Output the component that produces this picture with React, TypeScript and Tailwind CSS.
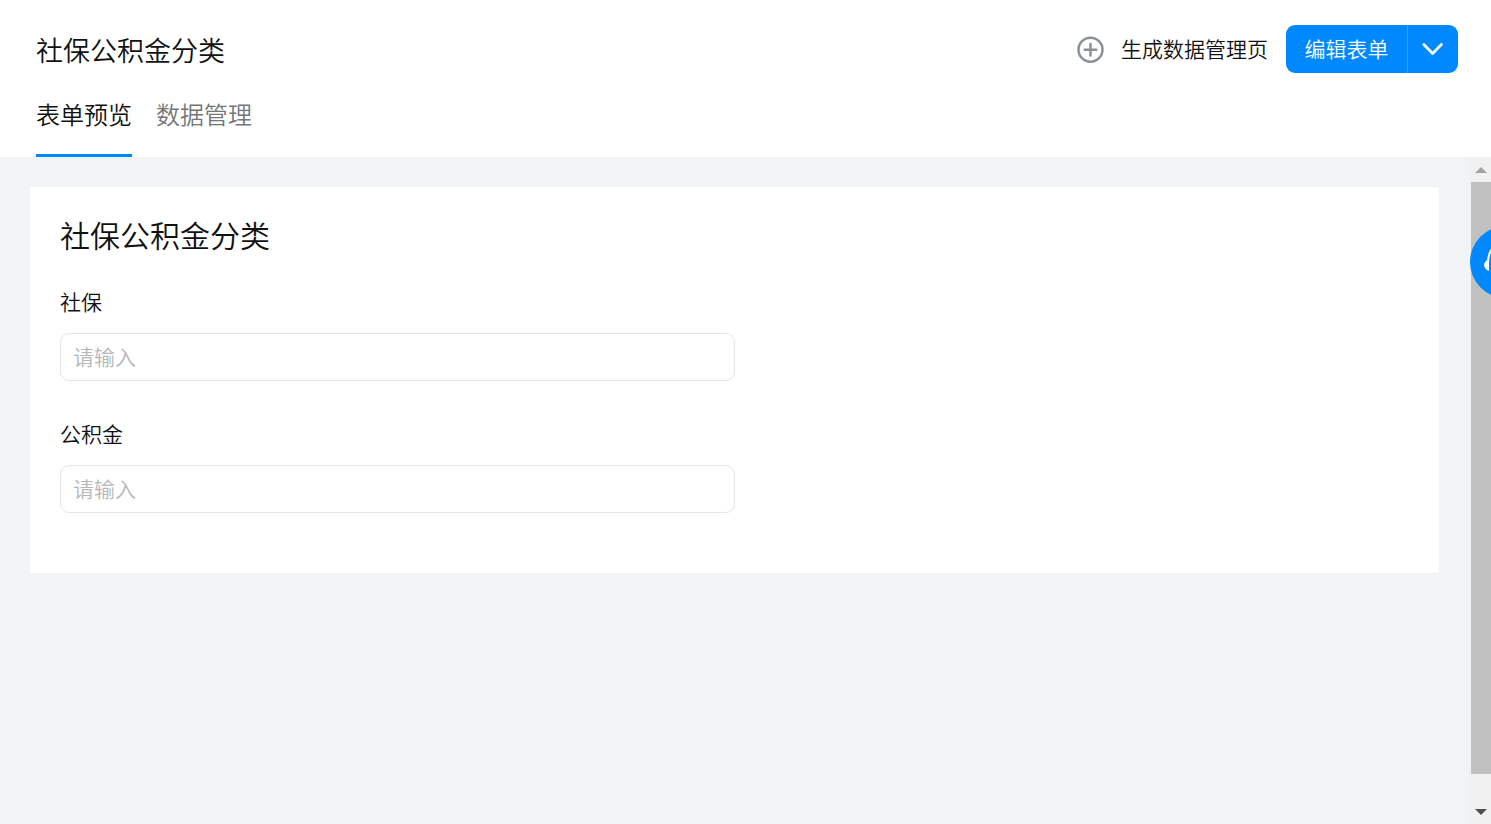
import { useState } from "react";
import clsx from "clsx";

const tabs = [
  { id: "preview", label: "表单预览" },
  { id: "data", label: "数据管理" },
];

const fields = [
  { id: "social-security", label: "社保" },
  { id: "housing-fund", label: "公积金" },
];

function PlusCircleIcon() {
  return (
    <svg className="size-7 shrink-0" viewBox="0 0 28 28" fill="none" stroke="#8a9199" strokeWidth="2.5" strokeLinecap="round">
      <circle cx="13.5" cy="14.7" r="12" />
      <path d="M13.5 8.9v11.6M7.7 14.7h11.6" />
    </svg>
  );
}

function HeaderActions() {
  return (
    <div className="flex items-center">
      <button type="button" className="flex items-center gap-4 text-[21px] leading-8">
        <PlusCircleIcon />
        <span className="pb-[2px]">生成数据管理页</span>
      </button>
      <div className="ml-[18px] flex h-12 overflow-hidden rounded-[9px] bg-[#0089ff] text-white">
        <button type="button" className="w-[121px] pb-[3px] text-[21px] leading-8">
          编辑表单
        </button>
        <button type="button" aria-label="更多操作" className="flex w-[51px] items-center justify-center border-l border-[#33a1ff]">
          <svg className="size-6" viewBox="0 0 24 24" fill="none" stroke="currentColor" strokeWidth="2.8" strokeLinecap="round" strokeLinejoin="round">
            <path d="M2.8 7.6l8.8 8.8 8.8-8.8" />
          </svg>
        </button>
      </div>
    </div>
  );
}

function ScrollRail() {
  return (
    <div aria-hidden="true" className="flex w-[22px] shrink-0 flex-col bg-[#f1f1f1] pl-[2px]">
      <div className="flex h-[25px] items-center justify-center">
        <svg className="h-[6px] w-[12px]" viewBox="0 0 12 6" fill="#a3a3a3">
          <path d="M6 0l6 6H0z" />
        </svg>
      </div>
      <div className="flex-1">
        <div className="h-[96%] bg-[#c1c1c1]" />
      </div>
      <div className="flex h-[25px] items-center justify-center">
        <svg className="h-[6px] w-[12px]" viewBox="0 0 12 6" fill="#505050">
          <path d="M0 0h12L6 6z" />
        </svg>
      </div>
    </div>
  );
}

function SupportButton() {
  return (
    <button
      type="button"
      aria-label="在线客服"
      className="absolute top-[69px] -right-[51px] size-[72px] rounded-full bg-[#0089ff] text-white"
    >
      <svg className="size-full" viewBox="0 0 72 72" fill="none" stroke="currentColor" strokeWidth="2">
        <path d="M18 37C18 24 25 18 36 18S54 24 54 37" />
        <path d="M19 33v12c-3-1-5-4-5-6s2-5 5-6zM53 33v12c3-1 5-4 5-6s-2-5-5-6z" fill="currentColor" stroke="none" />
      </svg>
    </button>
  );
}

export default function App() {
  const [activeTab, setActiveTab] = useState("preview");

  return (
    <div className="flex h-screen flex-col bg-[#f1f3f5] font-['Noto_Sans_CJK_SC',sans-serif] font-[350] text-[#111]">
      <header className="bg-white pt-[25px] pr-[33px] pl-9">
        <div className="flex items-center justify-between">
          <h1 className="pt-[2px] text-[27px] leading-10">社保公积金分类</h1>
          <HeaderActions />
        </div>
        <nav className="flex h-[84px] gap-6">
          {tabs.map((tab) => (
            <button
              key={tab.id}
              type="button"
              onClick={() => setActiveTab(tab.id)}
              className={clsx(
                "border-b-3 text-2xl",
                tab.id === activeTab ? "border-[#0089ff]" : "border-transparent text-[#747677]",
              )}
            >
              {tab.label}
            </button>
          ))}
        </nav>
      </header>

      <div className="relative flex min-h-0 flex-1 overflow-hidden">
        <main className="flex-1 overflow-auto p-[30px]">
          <form className="bg-white px-[30px] pt-[30px] pb-[60px]">
            <h2 className="mb-9 text-[30px] leading-[34px]">社保公积金分类</h2>
            <div className="flex w-1/2 flex-col gap-[38px]">
              {fields.map((field) => (
                <div key={field.id}>
                  <label htmlFor={field.id} className="mb-[18px] block text-[21px] leading-7">
                    {field.label}
                  </label>
                  <input
                    id={field.id}
                    type="text"
                    placeholder="请输入"
                    className="block h-12 w-full rounded-[9px] border border-[#e4e5e6] px-3 pb-[3px] text-[21px] outline-none placeholder:text-[#b5b6b7] focus:border-[#0089ff]"
                  />
                </div>
              ))}
            </div>
          </form>
        </main>
        <ScrollRail />
        <SupportButton />
      </div>
    </div>
  );
}
